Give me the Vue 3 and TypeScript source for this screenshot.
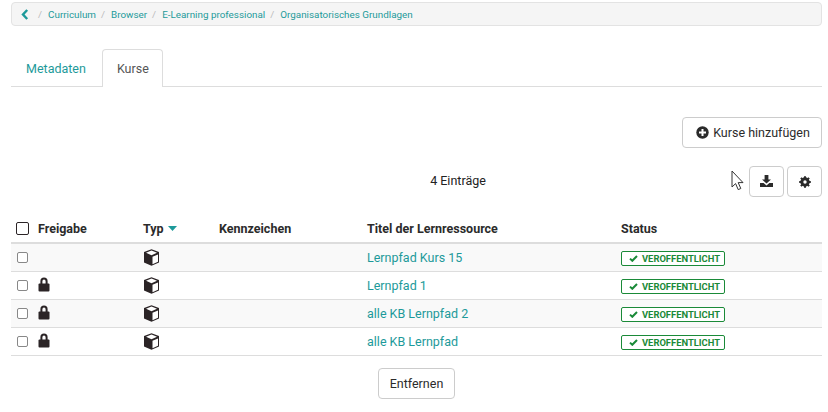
<script setup lang="ts">
const crumbs = ['Curriculum', 'Browser', 'E-Learning professional', 'Organisatorisches Grundlagen']
const rows = [
  { title: 'Lernpfad Kurs 15', locked: false },
  { title: 'Lernpfad 1', locked: true },
  { title: 'alle KB Lernpfad 2', locked: true },
  { title: 'alle KB Lernpfad', locked: true },
]
</script>

<template>
  <div class="page">
    <nav class="crumbs">
      <svg class="back" width="8" height="11" viewBox="0 0 8 11"><path d="M6.200 1 2 5.500 6.200 10" fill="none" stroke="#1d9a9a" stroke-width="2.400" /></svg>
      <template v-for="c in crumbs" :key="c">
        <span class="sep">/</span>
        <a class="crumb">{{ c }}</a>
      </template>
    </nav>

    <div class="tabs">
      <a class="tab">Metadaten</a>
      <a class="tab active">Kurse</a>
    </div>

    <div class="actions">
      <button class="btn add">
        <svg width="13" height="13" viewBox="0 0 13 13"><circle cx="6.500" cy="6.500" r="6.200" fill="#2b2b2b" /><path d="M6.500 3v7M3 6.500h7" stroke="#fff" stroke-width="2" /></svg>
        <span>Kurse hinzufügen</span>
      </button>
    </div>

    <div class="toolbar">
      <div class="count">4 Einträge</div>
      <div class="tools">
        <button class="btn icon">
          <svg class="dl" width="13" height="12" viewBox="0 0 13 12"><path d="M4.600 0h3.800v4.400H11L6.500 8.600 2 4.400h2.600z" fill="#2b2b2b" /><path d="M0 8h3.600l2.900 2.400L9.400 8H13v4H0z" fill="#2b2b2b" /></svg>
        </button>
        <button class="btn icon">
          <svg width="12" height="12" viewBox="0 0 12 12"><circle cx="6" cy="6" r="3.400" fill="none" stroke="#2b2b2b" stroke-width="2.600" /><path d="M6 .2v11.600M.2 6h11.600M1.900 1.900l8.200 8.200M10.100 1.900l-8.200 8.200" stroke="#2b2b2b" stroke-width="2" /><circle cx="6" cy="6" r="1.700" fill="#fff" /></svg>
        </button>
      </div>
    </div>

    <div class="table">
      <div class="row head">
        <div class="c-sel"><span class="check big"></span></div>
        <div class="c-share">Freigabe</div>
        <div class="c-type">Typ <svg class="caret" width="9" height="5" viewBox="0 0 9 5"><path d="M0 0h9L4.500 5z" fill="#1d9a9a" /></svg></div>
        <div class="c-mark">Kennzeichen</div>
        <div class="c-title">Titel der Lernressource</div>
        <div class="c-status">Status</div>
      </div>
      <div v-for="r in rows" :key="r.title" class="row body">
        <div class="c-sel"><span class="check"></span></div>
        <div class="c-share">
          <svg v-if="r.locked" class="lock" width="12" height="15" viewBox="0 0 12 15"><path d="M3.400 7V4.200a2.600 2.600 0 0 1 5.200 0V7" fill="none" stroke="#2b2426" stroke-width="2" /><rect x="0.500" y="6.500" width="11" height="8" rx="1" fill="#2b2426" /></svg>
        </div>
        <div class="c-type">
          <svg width="17" height="17" viewBox="0 0 17 17"><path d="M8.500.3 16 3v10.500L8.500 16.700 1 13.500V3z" fill="#2b2426" /><path d="M8.500 1.500 14 3.800 8.500 6.200 3 3.800z" fill="#fff" /><path d="M9.500 7.800 15 5.400v7.400L9.500 15.200z" fill="#fff" /></svg>
        </div>
        <div class="c-mark"></div>
        <div class="c-title"><a>{{ r.title }}</a></div>
        <div class="c-status">
          <span class="badge">
            <svg width="9" height="7" viewBox="0 0 9 7"><path d="M1 3.600 3.300 5.800 8 1" fill="none" stroke="#1a8a38" stroke-width="2" /></svg>
            VEROFFENTLICHT
          </span>
        </div>
      </div>
    </div>

    <div class="footer"><button class="btn">Entfernen</button></div>

    <svg class="cursor" width="14" height="22" viewBox="0 0 14 22"><path d="M1 1v16l3.600-3.400 2.600 6 2.600-1.100-2.600-5.900H12z" fill="#fff" stroke="#333" stroke-width="1" /></svg>
  </div>
</template>

<style>
body { margin: 0; background: #fff; }
</style>

<style scoped>
.page {
  position: relative;
  box-sizing: border-box;
  width: 828px;
  height: 412px;
  padding: 2px 6px 0 11px;
  overflow: hidden;
  font-family: Roboto, "Noto Sans", sans-serif;
  font-size: 12.5px;
  color: #2b2b2b;
}
.crumbs {
  display: flex;
  align-items: center;
  box-sizing: border-box;
  height: 24px;
  padding: 0 9px;
  background: #f5f5f5;
  border: 1px solid #e3e3e3;
  border-radius: 4px;
  font-size: 9.85px;
}
.back { margin-right: 4px; }
.sep { color: #bbb; margin: 0 6px 0 5px; }
.crumb { color: #1d9a9a; }
.tabs {
  display: flex;
  height: 38px;
  margin-top: 23px;
  border-bottom: 1px solid #ddd;
  box-sizing: border-box;
}
.tab {
  box-sizing: border-box;
  height: 38px;
  padding: 11px 15px 0 14px;
  line-height: 16px;
  color: #1d9a9a;
  border: 1px solid transparent;
  border-bottom: 0;
}
.tab.active {
  padding-right: 13px;
  color: #555;
  background: #fff;
  border-color: #ddd;
  border-radius: 4px 4px 0 0;
}
.actions { display: flex; justify-content: flex-end; margin-top: 30px; }
.btn {
  box-sizing: border-box;
  height: 31px;
  padding: 0 11px;
  font: inherit;
  color: #2b2b2b;
  background: #fff;
  border: 1px solid #ccc;
  border-radius: 4px;
  white-space: nowrap;
}
.add {
  width: 140px;
  padding-left: 13px;
  display: flex;
  align-items: center;
  justify-content: center;
  gap: 4px;
}
.toolbar {
  display: flex;
  justify-content: flex-end;
  align-items: center;
  margin-top: 18px;
  height: 31px;
}
.count {
  flex: 1;
  margin: 0 0 2px 156px;
  text-align: center;
  color: #222;
}
.tools { display: flex; gap: 3px; }
.icon {
  width: 35px;
  padding: 0;
  display: flex;
  align-items: center;
  justify-content: center;
}
.dl { margin-top: -2px; }
.table { margin-top: 20px; }
.row {
  display: grid;
  grid-template-columns: 27px 105px 76px 148px 254px 1fr;
  align-items: center;
}
.head {
  height: 27px;
  border-bottom: 2px solid #ddd;
  font-weight: 700;
  padding-bottom: 3px;
  box-sizing: border-box;
}
.body {
  height: 28px;
  box-sizing: border-box;
  border-bottom: 1px solid #ddd;
}
.body:nth-child(even) { background: #f9f9f9; }
.c-sel { padding-left: 6px; display: flex; }
.c-title a { color: #1d9a9a; }
.c-share { display: flex; align-items: center; }
.c-type { display: flex; align-items: center; gap: 4px; }
.check {
  display: block;
  box-sizing: border-box;
  width: 11px;
  height: 11px;
  border: 1px solid #888;
  border-radius: 2px;
  background: #fff;
}
.check.big {
  width: 13px;
  height: 13px;
  border-color: #2b2426;
  border-width: 1.5px;
  margin-left: -1px;
}
.lock { margin-top: -2px; }
.badge {
  display: inline-flex;
  align-items: center;
  gap: 4px;
  box-sizing: border-box;
  height: 15px;
  padding: 0 4px 0 7px;
  font-size: 9.4px;
  font-weight: 700;
  color: #1a8a38;
  border: 1px solid #1a8a38;
  border-radius: 2px;
  background: #fff;
}
.footer { display: flex; justify-content: center; margin-top: 12px; }
.cursor { position: absolute; left: 731px; top: 170px; }
</style>
